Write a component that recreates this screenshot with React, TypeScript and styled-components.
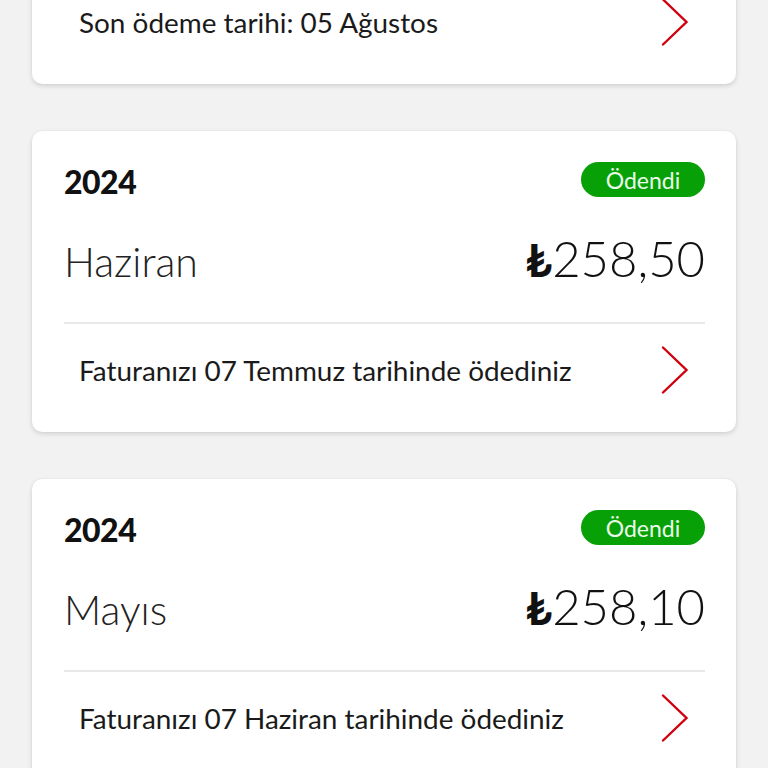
import React from "react";
import styled, { createGlobalStyle } from "styled-components";

const Global = createGlobalStyle`
  html, body { margin: 0; padding: 0; background: #f2f2f2; }
  body { font-family: Lato, "Noto Sans", sans-serif; color: #1a1a1a; overflow: hidden; }
`;

const Page = styled.div`
  display: flex;
  flex-direction: column;
  gap: 47px;
  padding: 0 32px;
  margin-top: -24px;
`;

const Card = styled.div`
  background: #fff;
  border-radius: 10px;
  box-shadow: 0 2px 5px rgba(0, 0, 0, 0.14), 0 0 1px rgba(0, 0, 0, 0.08);
  padding: 0 31px 16px 32px;
  display: flex;
  flex-direction: column;
`;

const Header = styled.div`
  display: flex;
  justify-content: space-between;
  align-items: center;
  height: 35px;
  margin-top: 31px;
`;

const Year = styled.div`
  font-size: 32px;
  font-weight: 900;
  color: #111;
  letter-spacing: -0.5px;
  transform: translateY(2px);
`;

const Badge = styled.div`
  background: #07a007;
  color: #e9fbe9;
  border-radius: 18px;
  height: 35px;
  width: 124px;
  display: flex;
  align-items: center;
  justify-content: center;
  font-size: 23px;
  font-weight: 400;
`;

const AmountRow = styled.div`
  display: flex;
  justify-content: space-between;
  align-items: baseline;
  margin-top: 32px;
  height: 60px;
  padding-bottom: 33px;
  border-bottom: 2px solid #e8e8e8;
`;

const Month = styled.div`
  font-size: 41px;
  font-weight: 300;
  color: #222;
`;

const Amount = styled.div`
  font-size: 49px;
  font-weight: 300;
  color: #111;
  display: flex;
  align-items: baseline;
`;

const Lira = styled.span`
  font-weight: 700;
  font-size: 46px;
`;

const Footer = styled.div`
  height: 92px;
  display: flex;
  align-items: center;
  justify-content: space-between;
  padding: 0 16px 0 15px;
`;

const FooterText = styled.div`
  font-size: 27.9px;
  color: #1a1a1a;
`;

const Chevron = () => (
  <svg width="28" height="48" viewBox="0 0 28 48" fill="none">
    <path d="M2 1.5 L25.5 24 L2 46.5" stroke="#d0000f" strokeWidth="2.4" strokeLinecap="round" strokeLinejoin="miter" />
  </svg>
);

type Bill = { year: string; month: string; amount: string; text: string };

const bills: Bill[] = [
  { year: "2024", month: "Haziran", amount: "258,50", text: "Faturanızı 07 Temmuz tarihinde ödediniz" },
  { year: "2024", month: "Mayıs", amount: "258,10", text: "Faturanızı 07 Haziran tarihinde ödediniz" },
];

export default function App() {
  return (
    <>
      <Global />
      <Page>
        <Card>
          <Footer>
            <FooterText>Son ödeme tarihi: 05 Ağustos</FooterText>
            <Chevron />
          </Footer>
        </Card>
        {bills.map((b, i) => (
          <Card key={i}>
            <Header>
              <Year>{b.year}</Year>
              <Badge>Ödendi</Badge>
            </Header>
            <AmountRow>
              <Month>{b.month}</Month>
              <Amount>
                <Lira>₺</Lira>
                {b.amount}
              </Amount>
            </AmountRow>
            <Footer>
              <FooterText>{b.text}</FooterText>
              <Chevron />
            </Footer>
          </Card>
        ))}
      </Page>
    </>
  );
}
